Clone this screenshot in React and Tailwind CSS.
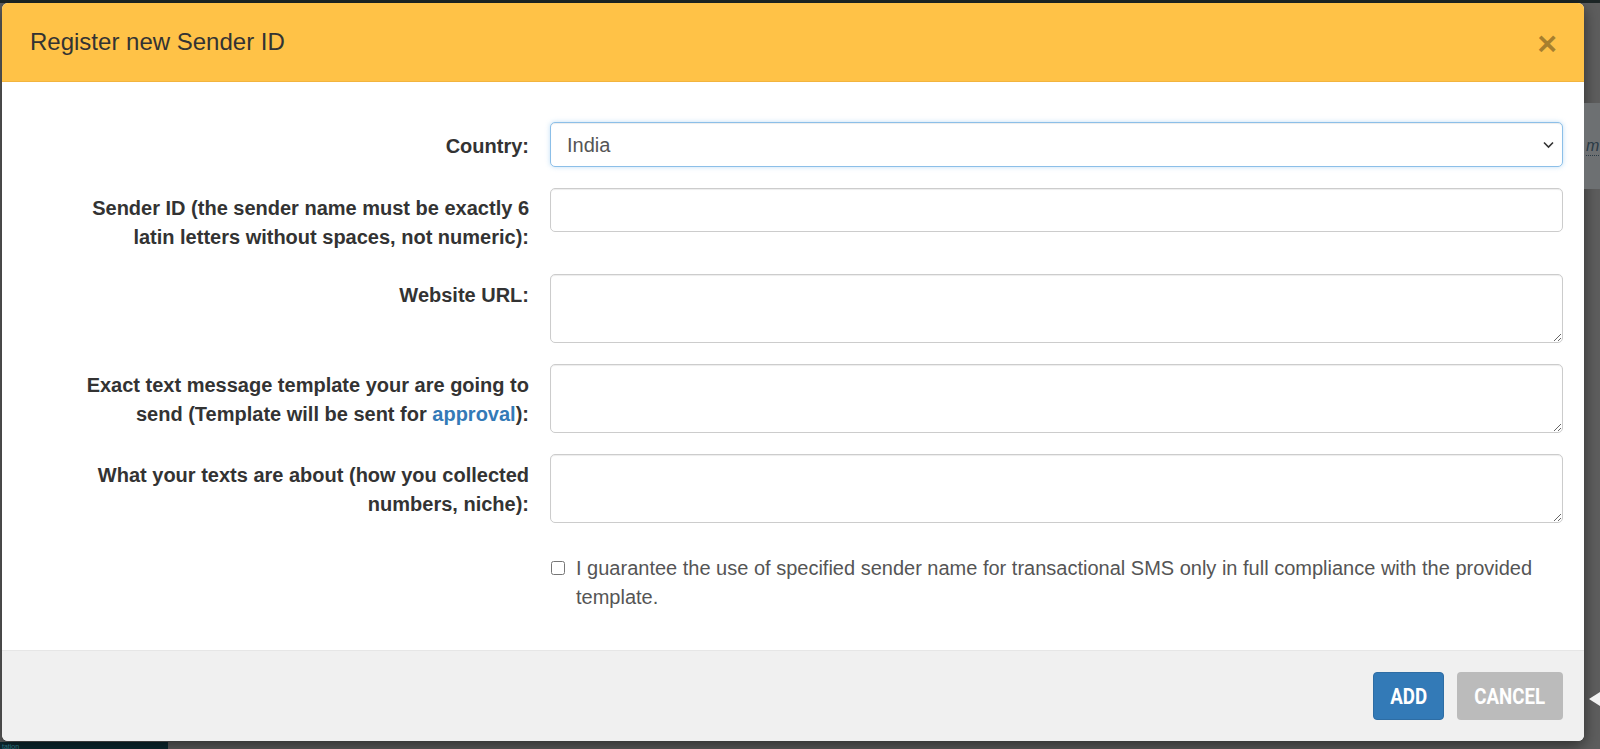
import { useState } from "react";

const FONT = { fontFamily: '"Liberation Sans", Arial, sans-serif' };
const BTN_FONT = { fontFamily: 'Roboto, "Liberation Sans", sans-serif' };

function Row({ label, labelPad = "pt-[7px]", className = "", children }) {
  return (
    <div className={`flex items-start gap-[21px] ${className}`}>
      <label
        className={`w-[506px] shrink-0 text-right text-[20px] font-bold leading-[28.57px] text-[#333] ${labelPad}`}
      >
        {label}
      </label>
      <div className="flex-1">{children}</div>
    </div>
  );
}

const fieldBase =
  "block w-full rounded-[5px] border border-[#ccc] bg-white px-[16px] text-[20px] text-[#555] shadow-[inset_0_1px_1px_rgba(0,0,0,0.075)] outline-none";

export default function App() {
  const [country, setCountry] = useState("India");
  const [agree, setAgree] = useState(false);

  return (
    <div className="h-[749px] w-[1600px] overflow-hidden bg-[#5e5e5e]" style={FONT}>
      <div className="h-[3px] bg-[#1d2626]" />

      <div className="flex">
        <div className="ml-[2px] w-[1582px] shrink-0 overflow-hidden rounded-[6px] bg-white shadow-[0_5px_15px_rgba(0,0,0,0.5)]">
          {/* header */}
          <div className="flex h-[79px] items-center justify-between border-b border-[#f2b43e] bg-[#ffc247] pl-[28px] pr-[27px]">
            <h4 className="text-[24px] leading-none text-[#333]">Register new Sender ID</h4>
            <button type="button" className="mt-[1px] text-[34px] font-bold leading-none text-black/35">
              ×
            </button>
          </div>

          {/* body */}
          <div className="h-[568px] px-[21px] pt-[40px]">
            <Row label="Country:" labelPad="pt-[10px]">
              <div className="relative">
                <select
                  value={country}
                  onChange={(e) => setCountry(e.target.value)}
                  className="block h-[45px] w-full appearance-none rounded-[5px] border border-[#8cbfe8] bg-white pl-[16px] text-[20px] text-[#555] shadow-[inset_0_1px_1px_rgba(0,0,0,0.075),0_0_5px_rgba(102,175,233,0.4)] outline-none"
                >
                  <option>India</option>
                  <option>United States</option>
                  <option>United Kingdom</option>
                </select>
                <svg
                  className="pointer-events-none absolute right-[9px] top-[19px]"
                  width="11"
                  height="8"
                  viewBox="0 0 11 8"
                  fill="none"
                  stroke="#333"
                  strokeWidth="1.6"
                >
                  <path d="M1 1.5l4.5 4.5L10 1.5" />
                </svg>
              </div>
            </Row>

            <Row
              className="mt-[21px]"
              labelPad="pt-[6px]"
              label={
                <>
                  Sender ID (the sender name must be exactly 6
                  <br />
                  latin letters without spaces, not numeric):
                </>
              }
            >
              <input type="text" className={`${fieldBase} h-[44px]`} />
            </Row>

            <Row className="mt-[23px]" label="Website URL:">
              <textarea className={`${fieldBase} h-[69px] py-[6px]`} />
            </Row>

            <Row
              className="mt-[21px]"
              label={
                <>
                  Exact text message template your are going to
                  <br />
                  send (Template will be sent for <a className="text-[#337ab7]">approval</a>):
                </>
              }
            >
              <textarea className={`${fieldBase} h-[69px] py-[6px]`} />
            </Row>

            <Row
              className="mt-[21px]"
              label={
                <>
                  What your texts are about (how you collected
                  <br />
                  numbers, niche):
                </>
              }
            >
              <textarea className={`${fieldBase} h-[69px] py-[6px]`} />
            </Row>

            <div className="mt-[31px] flex pl-[527px]">
              <label className="flex gap-[11px] text-[20px] leading-[28.57px] text-[#555]">
                <input
                  type="checkbox"
                  checked={agree}
                  onChange={(e) => setAgree(e.target.checked)}
                  className="ml-[1px] mt-[7px] h-[14px] w-[14px] shrink-0"
                />
                <span>
                  I guarantee the use of specified sender name for transactional SMS only in full compliance with the provided template.
                </span>
              </label>
            </div>
          </div>

          {/* footer */}
          <div className="flex h-[91px] justify-end gap-[13px] border-t border-[#e6e6e6] bg-[#f0f0f0] pr-[21px] pt-[21px]">
            <button
              type="button"
              className="h-[48px] w-[71px] rounded-[4px] border border-[#2e6da4] bg-[#337ab7] text-[22px] font-bold text-white"
              style={BTN_FONT}
            >
              <span className="inline-block scale-x-[0.85]">ADD</span>
            </button>
            <button
              type="button"
              className="h-[48px] w-[106px] rounded-[4px] bg-[#bbbbbb] text-[22px] font-bold text-white"
              style={BTN_FONT}
            >
              <span className="inline-block scale-x-[0.85]">CANCEL</span>
            </button>
          </div>
        </div>

        {/* page behind the backdrop, right edge */}
        <div className="flex flex-1 flex-col">
          <div className="mt-[100px] flex h-[86px] items-center bg-[#6d7072] pl-[2px]">
            <span className="border-b border-dotted border-[#2a3a45] text-[16px] italic leading-[18px] text-[#2a3a45]">m</span>
          </div>
          <div className="mt-[503px] flex justify-end">
            <svg width="11" height="14" viewBox="0 0 11 14">
              <path d="M11 0v14L0 7z" fill="#f2f2f2" />
            </svg>
          </div>
        </div>
      </div>

      <div className="mt-[1px] flex h-[8px] w-[168px] items-center bg-[#0d2a31] pl-[2px]">
        <span className="text-[7px] leading-[7px] text-[#2f6f7a]">tation</span>
      </div>
    </div>
  );
}
